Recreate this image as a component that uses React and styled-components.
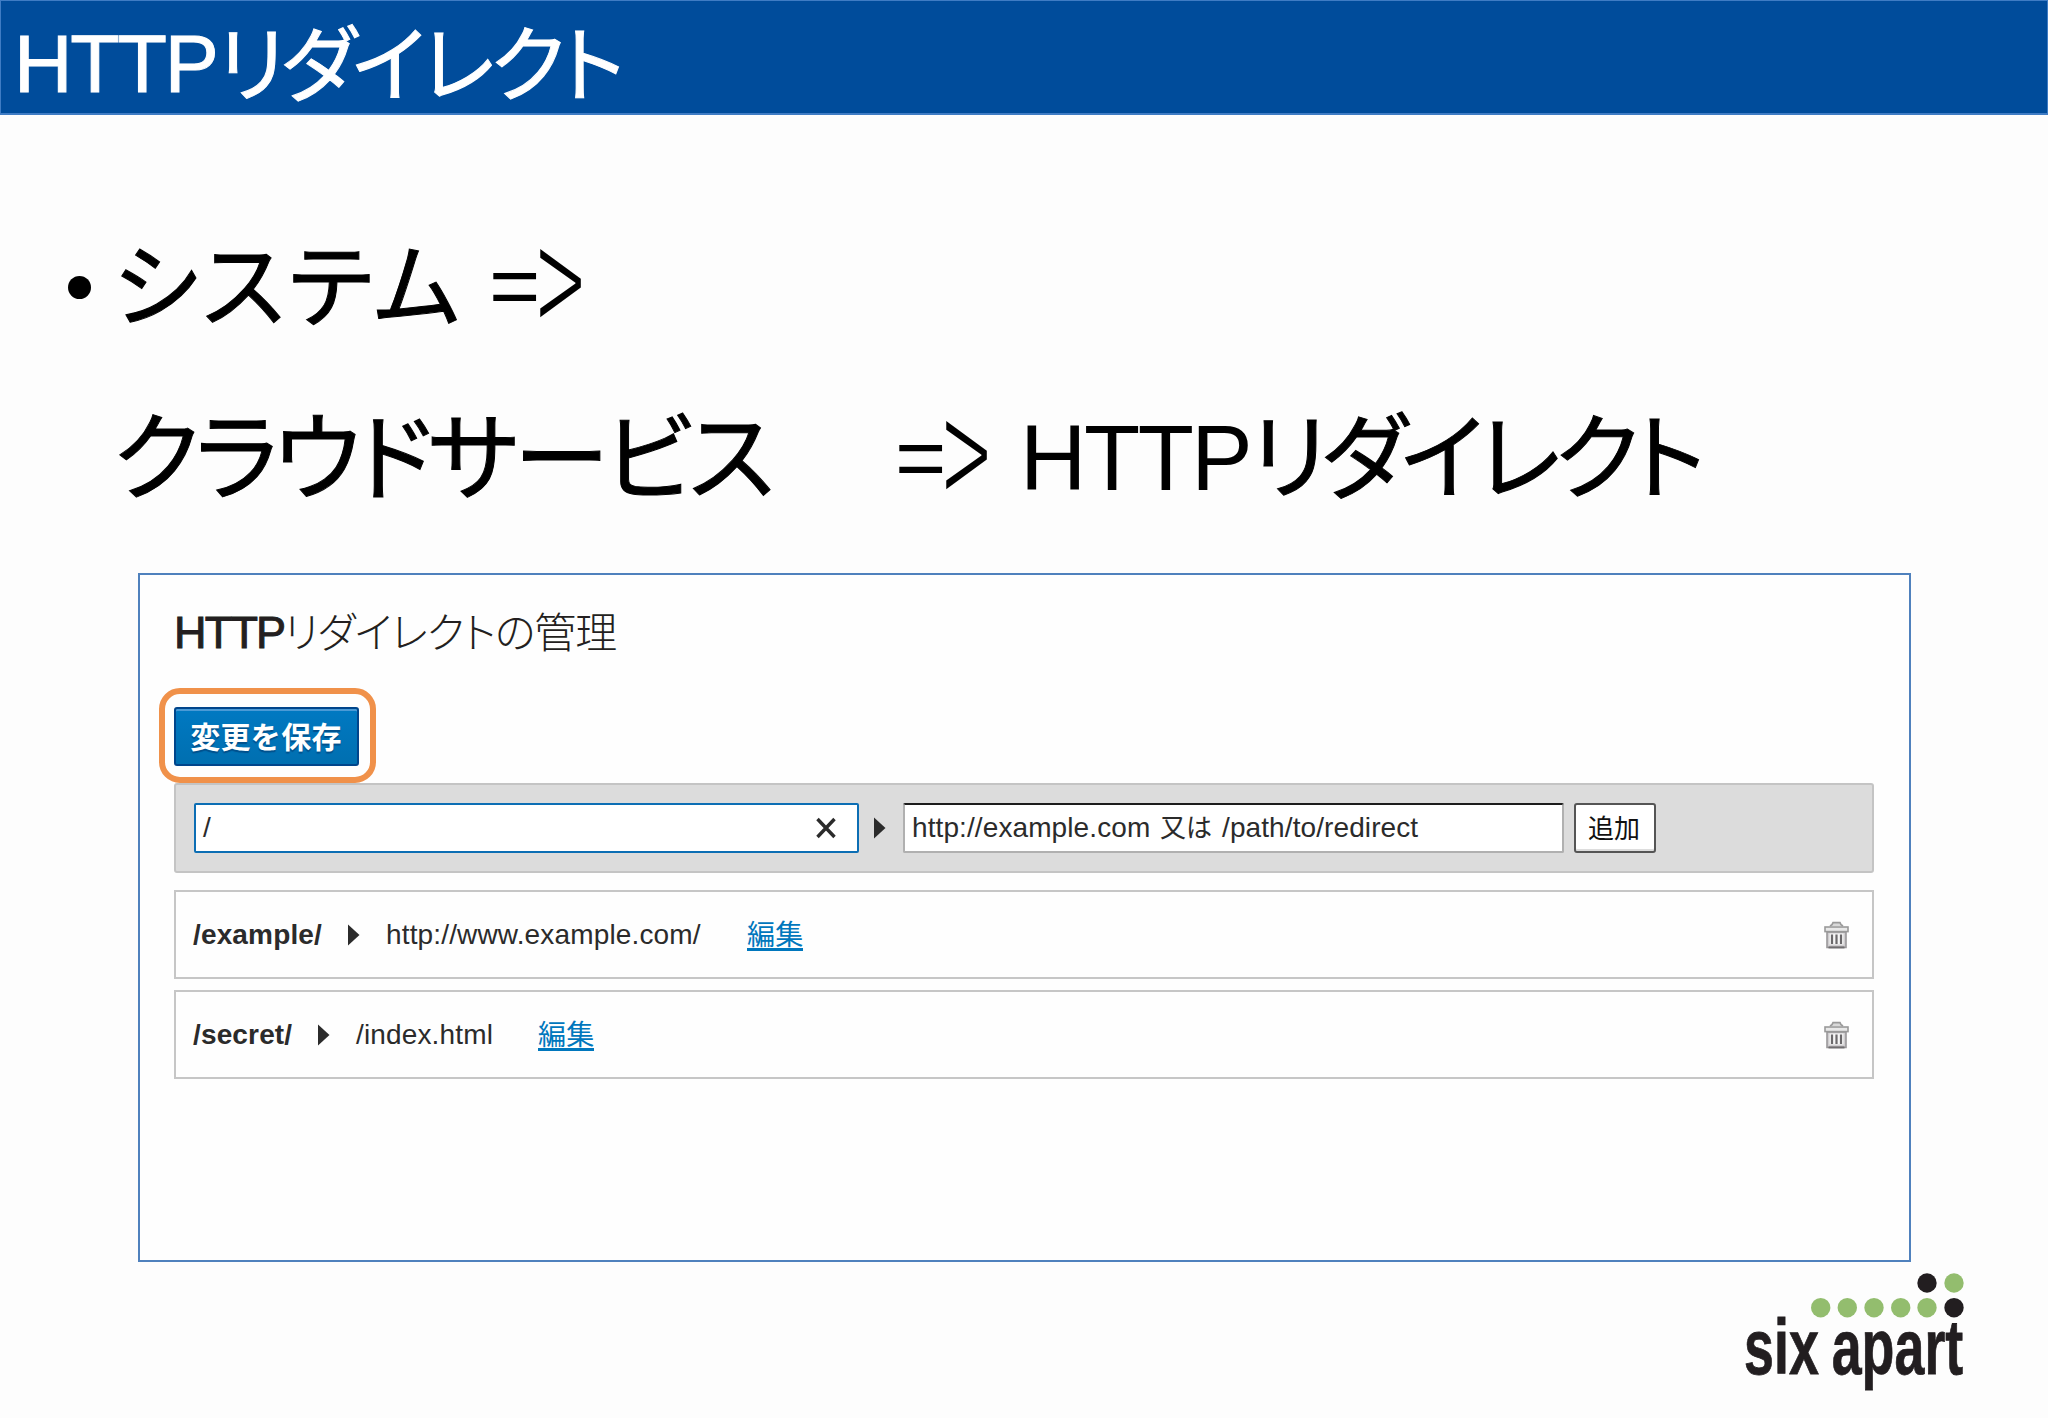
import React from 'react';
import styled, { createGlobalStyle, css } from 'styled-components'

const rules = [
  { from: '/example/', to: 'http://www.example.com/', fromWidth: 155, toWidth: 361 },
  { from: '/secret/', to: '/index.html', fromWidth: 125, toWidth: 182 },
]

const Arrow = () => (
  <ArrowIcon width='12' height='22' viewBox='0 0 12 22'>
    <path d='M0 0.5 L11.5 11 L0 21.5 Z' fill='#2b2b2b' />
  </ArrowIcon>
)

const Trash = () => (
  <svg width='25' height='28' viewBox='0 0 25 28'>
    <path d='M6 5 L8 3.6 L9 1.6 H16 L17 3.6 L19 5' fill='#d8d8d8' stroke='#999' strokeWidth='1.6' />
    <path d='M3 11 H22 V26.5 H3 Z' fill='#cfcdcf' stroke='#9a989a' strokeWidth='1.6' />
    <rect x='1' y='6' width='23' height='4.6' fill='#e8e8e8' stroke='#999' strokeWidth='1.6' />
    <rect x='5.5' y='12.5' width='14' height='11' fill='#f6f6f6' />
    <path d='M8 13.5 V23 M12.5 13.5 V23 M17 13.5 V23' stroke='#6b696b' strokeWidth='2.2' />
    <path d='M4.5 26.4 H20.5' stroke='#6f6d6f' strokeWidth='2' />
  </svg>
)

const dots = [
  [182, 10, '#221e20'],
  [209, 10, '#93bd6e'],
  [75.7, 34.7, '#93bd6e'],
  [102.3, 34.7, '#93bd6e'],
  [129, 34.7, '#93bd6e'],
  [155.7, 34.7, '#93bd6e'],
  [182, 34.7, '#93bd6e'],
  [209, 34.7, '#221e20'],
]

const Logo = () => (
  <LogoSvg width='240' height='130' viewBox='0 0 240 130'>
    {dots.map(([x, y, fill]) => (
      <circle key={`${x}-${y}`} cx={x} cy={y} r='9.7' fill={fill} />
    ))}
    <LogoText transform='translate(-1 101) scale(0.69 1)'>six apart</LogoText>
  </LogoSvg>
)

const App = () => {
  return (
    <>
      <GlobalStyle />
      <Slide>
        <Header>
          <Latin size={81} track={-2.2} width={203}>HTTP</Latin>
          <Kana size={83} track={-4.2} drop={3}>リダイレクト</Kana>
        </Header>
        <Lines>
          <Line>
            <Bullet />
            <Kana size={92} track={4} width={376} heavy>システム</Kana>
            <Implies><span>=</span><Tall>&gt;</Tall></Implies>
          </Line>
          <Line>
            <Indent />
            <Kana size={96} track={-4.2} width={782} heavy>クラウドサービス</Kana>
            <Implies><span>=</span><Tall>&gt;</Tall></Implies>
            <Latin size={92} track={-2.5} width={230} drop={-2}>HTTP</Latin>
            <Kana size={94} track={-6} heavy>リダイレクト</Kana>
          </Line>
        </Lines>
        <Card>
          <Title>
            <TitleLatin>HTTP</TitleLatin>
            <TitleKana>リダイレクトの管理</TitleKana>
          </Title>
          <Highlight>
            <SaveButton>変更を保存</SaveButton>
          </Highlight>
          <AddBar>
            <Field active width={665}>
              <span>/</span>
              <svg width='20' height='22' viewBox='0 0 20 22'>
                <path d='M1.5 2 L18.5 20 M18.5 2 L1.5 20' stroke='#2b2b2b' strokeWidth='3.4' />
              </svg>
            </Field>
            <Arrow />
            <Field width={661}>
              <FieldText width={248}>http://example.com</FieldText>
              <FieldText width={62} cjk>又は</FieldText>
              <span>/path/to/redirect</span>
            </Field>
            <AddButton>追加</AddButton>
          </AddBar>
          {rules.map((rule) => (
            <Row key={rule.from}>
              <From width={rule.fromWidth}>{rule.from}</From>
              <Arrow />
              <To width={rule.toWidth}>{rule.to}</To>
              <Edit href='#'>編集</Edit>
              <Trash />
            </Row>
          ))}
        </Card>
        <Logo />
      </Slide>
    </>
  );
};

const GlobalStyle = createGlobalStyle`
  * {
    box-sizing: border-box;
  }
  body {
    margin: 0;
    background: #fdfdfd;
    font-family: 'Liberation Sans', 'Noto Sans CJK JP', sans-serif;
  }
`

const Slide = styled.div`
  width: 2048px;
  height: 1418px;
  display: flex;
  flex-direction: column;
  background: #fdfdfd;
`

const Header = styled.header`
  height: 115px;
  flex: none;
  display: flex;
  align-items: baseline;
  padding-left: 13px;
  line-height: 110px;
  color: white;
  background: #004c9b;
  border: 1px solid #3f7cc4;
  border-bottom-width: 2px;
  -webkit-text-stroke: 1px white;
`

const Latin = styled.span`
  flex: none;
  font-size: ${({ size }) => size}px;
  letter-spacing: ${({ track }) => track}px;
  width: ${({ width }) => width}px;
  transform: translateY(${({ drop = 0 }) => drop}px);
`

const Kana = styled.span`
  flex: none;
  font-family: 'Noto Sans CJK JP', sans-serif;
  font-feature-settings: 'palt';
  font-size: ${({ size }) => size}px;
  letter-spacing: ${({ track }) => track}px;
  white-space: nowrap;
  transform: translateY(${({ drop = 0 }) => drop}px);
  ${({ width }) => width && css`
    width: ${width}px;
  `}
  ${({ heavy }) => heavy && css`
    -webkit-text-stroke: 1px black;
  `}
`

const Lines = styled.div`
  flex: none;
  height: 458px;
  padding: 79px 0 0 68px;
  color: black;
`

const Line = styled.div`
  display: flex;
  align-items: baseline;
  height: 171px;
  line-height: 171px;
`

const Bullet = styled.i`
  flex: none;
  align-self: flex-start;
  width: 23px;
  height: 23px;
  margin: 82px 22px 0 0;
  border-radius: 50%;
  background: black;
`

const Indent = styled.i`
  flex: none;
  width: 45px;
`

const Implies = styled.span`
  flex: none;
  width: 125px;
  font-size: 88px;
  letter-spacing: -3.5px;
  transform: translateY(-4px);
`

const Tall = styled.span`
  display: inline-block;
  font-family: 'Noto Sans CJK JP', sans-serif;
  font-weight: 300;
  line-height: 100px;
  transform: scaleY(1.85);
  transform-origin: 50% 56%;
`

const Card = styled.main`
  flex: none;
  width: 1773px;
  height: 689px;
  margin-left: 138px;
  padding: 0 35px 0 34px;
  display: flex;
  flex-direction: column;
  border: 2px solid #4f81bd;
  background: #fefefe;
`

const Title = styled.h1`
  height: 113px;
  margin: 0;
  display: flex;
  align-items: baseline;
  line-height: 110px;
  font-weight: 400;
  color: #231f20;
`

const TitleLatin = styled.span`
  width: 110px;
  font-size: 45px;
  letter-spacing: -1.8px;
  -webkit-text-stroke: 1px #231f20;
`

const TitleKana = styled.span`
  font-family: 'Noto Sans CJK JP', sans-serif;
  font-feature-settings: 'palt';
  font-size: 42px;
  font-weight: 300;
  letter-spacing: -1px;
`

const Highlight = styled.div`
  flex: none;
  width: 217px;
  height: 95px;
  margin-left: -15px;
  padding: 13px 9px;
  border: 6px solid #f0914a;
  border-radius: 21px;
`

const SaveButton = styled.button`
  display: block;
  width: 185px;
  height: 59px;
  padding: 0 1px 4px 0;
  font: bold 30px/53px 'Noto Sans CJK JP', sans-serif;
  letter-spacing: 0.3px;
  color: white;
  text-shadow: 0 2px 1px #00508c;
  white-space: nowrap;
  border: 2px solid #00458b;
  border-radius: 3px;
  background: linear-gradient(#0079c2, #006fb0);
  box-shadow: inset 0 2px #4a9ad6;
`

const AddBar = styled.div`
  flex: none;
  height: 90px;
  margin-bottom: 17px;
  padding: 0 18px;
  display: flex;
  align-items: center;
  background: #dcdcdc;
  border: 2px solid #c4c4c4;
  border-radius: 3px;
`

const Field = styled.div`
  flex: none;
  width: ${({ width }) => width}px;
  height: 50px;
  padding: 0 21px 0 7px;
  display: flex;
  align-items: center;
  font-size: 28px;
  letter-spacing: 0.1px;
  color: #2b2b2b;
  background: white;
  border: 2px solid #b0b0b0;
  border-top-color: #1c1c1c;
  border-radius: 2px;
  ${({ active }) => active && css`
    justify-content: space-between;
    border-color: #0c6eb4;
  `}
`

const FieldText = styled.span`
  flex: none;
  width: ${({ width }) => width}px;
  white-space: nowrap;
  ${({ cjk }) => cjk && css`
    font-size: 26px;
    line-height: 30px;
  `}
`

const ArrowIcon = styled.svg`
  flex: none;
  margin: 0 17px 0 15px;
`

const AddButton = styled.button`
  flex: none;
  width: 82px;
  height: 50px;
  margin-left: 10px;
  padding: 0 2px 3px 0;
  font: 26px/40px 'Noto Sans CJK JP', sans-serif;
  color: #111;
  background: white;
  border: 2px solid #555;
  border-radius: 3px;
  box-shadow: inset 0 -2px #ddd;
`

const Row = styled.div`
  flex: none;
  height: 89px;
  margin-bottom: 11px;
  padding: 0 23px 0 17px;
  display: flex;
  align-items: center;
  font-size: 28px;
  letter-spacing: 0.15px;
  color: #2b2b2b;
  border: 2px solid #c6c6c6;

  ${ArrowIcon} {
    margin: 0 26px 0 0;
  }
  > svg:last-child {
    margin-left: auto;
  }
`

const From = styled.b`
  flex: none;
  width: ${({ width }) => width}px;
`

const To = styled.span`
  flex: none;
  width: ${({ width }) => width}px;
  white-space: nowrap;
`

const Edit = styled.a`
  font-family: 'Noto Sans CJK JP', sans-serif;
  line-height: 29px;
  color: #0077bd;
  text-decoration: none;
  border-bottom: 3px solid #0077bd;
`

const LogoSvg = styled.svg`
  flex: none;
  margin: 11px 0 0 1745px;
`

const LogoText = styled.text`
  font: bold 78px 'Liberation Sans', sans-serif;
  fill: #221e20;
  stroke: #221e20;
  stroke-width: 0.8px;
  word-spacing: -3px;
`

export default App;
